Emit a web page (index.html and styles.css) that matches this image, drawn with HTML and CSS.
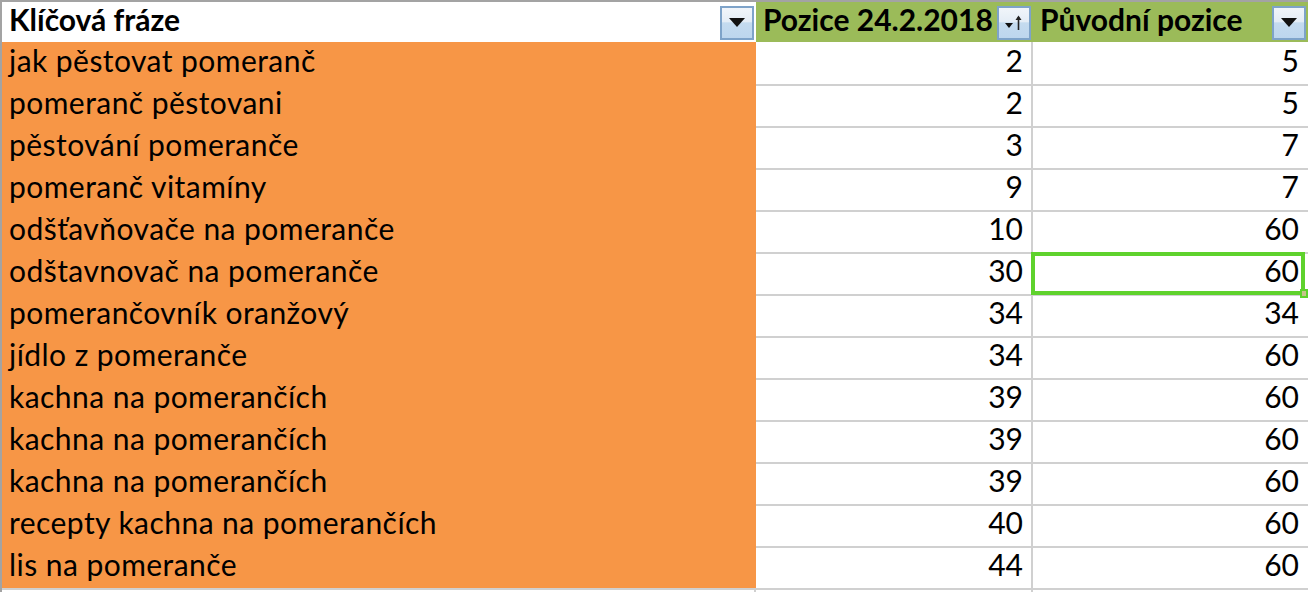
FILE: index.html
```html
<!DOCTYPE html>
<html lang="cs">
<head>
<meta charset="utf-8">
<title>Klíčové fráze</title>
<link rel="stylesheet" href="styles.css">
</head>
<body>
<div class="sheet">
  <div class="row head">
    <div class="cell a"><span class="txt">Klíčová fráze</span>
      <span class="btn"><svg width="16" height="10" viewBox="0 0 16 10"><path d="M0 0H16L8 9Z" fill="#111"/></svg></span>
    </div>
    <div class="cell b"><span class="txt">Pozice 24.2.2018</span>
      <span class="btn"><svg width="26" height="26" viewBox="0 0 26 26"><path d="M4 13H12L8 18Z" fill="#111"/><path d="M17.5 7V20" stroke="#222" stroke-width="1.6"/><path d="M14.5 10L17.5 5.5L20.5 10Z" fill="#222"/></svg></span>
    </div>
    <div class="cell c"><span class="txt">Původní pozice</span>
      <span class="btn"><svg width="16" height="10" viewBox="0 0 16 10"><path d="M0 0H16L8 9Z" fill="#111"/></svg></span>
    </div>
  </div>
  <div class="row first"><div class="cell a">jak pěstovat pomeranč</div><div class="cell b">2</div><div class="cell c">5</div></div>
  <div class="row"><div class="cell a">pomeranč pěstovani</div><div class="cell b">2</div><div class="cell c">5</div></div>
  <div class="row"><div class="cell a">pěstování pomeranče</div><div class="cell b">3</div><div class="cell c">7</div></div>
  <div class="row"><div class="cell a">pomeranč vitamíny</div><div class="cell b">9</div><div class="cell c">7</div></div>
  <div class="row"><div class="cell a">odšťavňovače na pomeranče</div><div class="cell b">10</div><div class="cell c">60</div></div>
  <div class="row"><div class="cell a">odštavnovač na pomeranče</div><div class="cell b">30</div><div class="cell c selected">60<span class="handle"></span></div></div>
  <div class="row"><div class="cell a">pomerančovník oranžový</div><div class="cell b">34</div><div class="cell c">34</div></div>
  <div class="row"><div class="cell a">jídlo z pomeranče</div><div class="cell b">34</div><div class="cell c">60</div></div>
  <div class="row"><div class="cell a">kachna na pomerančích</div><div class="cell b">39</div><div class="cell c">60</div></div>
  <div class="row"><div class="cell a">kachna na pomerančích</div><div class="cell b">39</div><div class="cell c">60</div></div>
  <div class="row"><div class="cell a">kachna na pomerančích</div><div class="cell b">39</div><div class="cell c">60</div></div>
  <div class="row"><div class="cell a">recepty kachna na pomerančích</div><div class="cell b">40</div><div class="cell c">60</div></div>
  <div class="row"><div class="cell a">lis na pomeranče</div><div class="cell b">44</div><div class="cell c">60</div></div>
  <div class="row blank"><div class="cell a"></div><div class="cell b"></div><div class="cell c"></div></div>
</div>
</body>
</html>
```

FILE: styles.css
```css
html, body {
  margin: 0;
  padding: 0;
  background: #ffffff;
}
.sheet {
  width: 1308px;
  height: 592px;
  overflow: hidden;
  box-sizing: border-box;
  border-top: 2px solid #a3a3a3;
  border-left: 2px solid #a3a3a3;
  font-family: "Lato", "Liberation Sans", sans-serif;
  font-size: 30px;
  color: #000;
}
.row {
  display: flex;
  height: 42px;
  box-sizing: border-box;
}
.cell {
  box-sizing: border-box;
  height: 100%;
  display: flex;
  align-items: flex-end;
  padding-bottom: 6px;
  white-space: nowrap;
  line-height: 36px;
}
.cell.a {
  width: 754px;
  padding-left: 7px;
  background: #f79646;
  letter-spacing: 0.45px;
}
.cell.b {
  width: 277px;
  justify-content: flex-end;
  padding-right: 8px;
  border-right: 2px solid #d0d0d0;
}
.cell.c {
  flex: 1;
  justify-content: flex-end;
  padding-right: 9px;
}
.row + .row:not(.first) .cell.b,
.row + .row:not(.first) .cell.c {
  border-top: 2px solid #d0d0d0;
}
.row.blank .cell.a {
  background: #fff;
  border-right: 2px solid #d0d0d0;
  border-top: 2px solid #d0d0d0;
}

/* header */
.row.head {
  height: 40px;
}
.head .cell {
  font-weight: 700;
  justify-content: space-between;
  align-items: flex-end;
  padding-bottom: 0;
  padding-right: 2px;
  letter-spacing: 0;
}
.head .cell .txt {
  padding-bottom: 5px;
}
.head .cell.a {
  background: #ffffff;
}
.head .cell.b {
  background: #9bbb59;
  border-right: 0;
  padding-left: 7px;
  width: 277px;
}
.head .cell.c {
  background: #9bbb59;
  padding-left: 7px;
}
.btn {
  width: 34px;
  height: 34px;
  flex: none;
  box-sizing: border-box;
  margin-bottom: 2px;
  border: 2px solid #7ea3c9;
  background: linear-gradient(#f1f5fa 0%, #e4edf6 45%, #c4dbef 50%, #bdd6ee 100%);
  display: flex;
  align-items: center;
  justify-content: center;
}

/* selected cell */
.cell.selected {
  position: relative;
}
.cell.selected::after {
  content: "";
  position: absolute;
  top: -2px;
  left: -2px;
  right: 3px;
  bottom: -1px;
  border: 4px solid #5fd22d;
  pointer-events: none;
}
.handle {
  position: absolute;
  right: 0;
  bottom: -4px;
  width: 8px;
  height: 9px;
  box-sizing: border-box;
  background: #c7c48c;
  border: 2px solid #5fd22d;
  z-index: 2;
}
```
